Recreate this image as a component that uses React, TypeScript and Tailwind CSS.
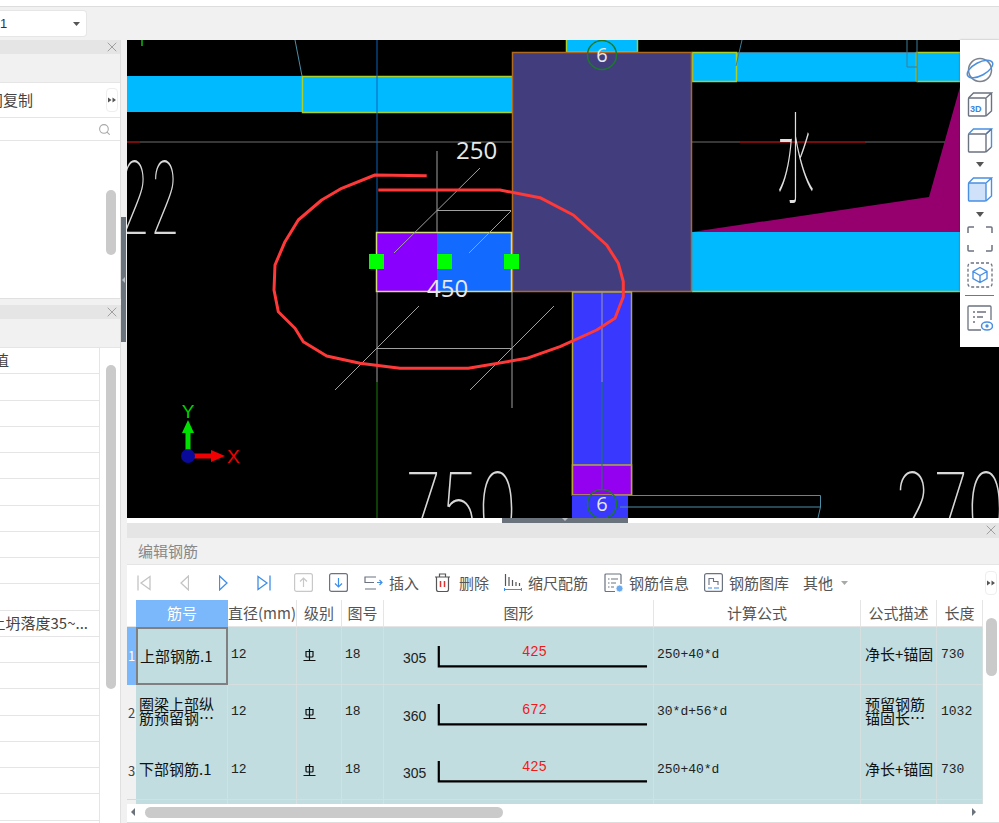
import React from "react";
import { X, Search } from "lucide-react";

const GRID = "grid grid-cols-[9px_92px_69px_45px_42px_270px_207px_76px_46px]";

const ROWS = [
    { no: "1", name: "上部钢筋.1", side: "305", len: "425", formula: "250+40*d", desc: "净长+锚固", total: "730" },
    { no: "2", name: "圈梁上部纵筋预留钢…", side: "360", len: "672", formula: "30*d+56*d", desc: "预留钢筋锚固长…", total: "1032" },
    { no: "3", name: "下部钢筋.1", side: "305", len: "425", formula: "250+40*d", desc: "净长+锚固", total: "730" },
];

const HEADERS = ["直径(mm)", "级别", "图号", "图形", "计算公式", "公式描述", "长度"];

const PANEL_ROWS = Array.from({ length: 18 }, (_, i) => i);

const RED_LINE =
    "426.7,175.7 375,175 341.7,188.3 321.7,200 298.3,220 285,241.7 275,265 274,290 278.3,311.7 295,328.3 303.3,341.7 326.7,356 360,363.3 400,368.3 468.3,368.3 526.7,358.3 560,346.7 596.7,330 615,318.3 623.3,296.7 623.3,281.7 618.3,263.3 606.7,245 573.3,215 540,197.7 500,190 378.3,190";

const DoubleArrow = () => (
    <svg width="8" height="6" viewBox="0 0 8 6" fill="#555">
        <path d="M0 0.5 L3.5 3 L0 5.5Z M4.5 0.5 L8 3 L4.5 5.5Z" />
    </svg>
);

const MoreButton = () => (
    <div className="ml-auto flex h-[24px] w-[12px] items-center justify-center rounded border border-[#eeeeee] bg-white">
        <DoubleArrow />
    </div>
);

const PanelHeader = () => (
    <div className="flex h-[14px] shrink-0 items-center justify-end bg-[#e5e5e5]">
        <X size={16} strokeWidth={1.5} className="text-[#a0a0a0]" />
    </div>
);

const CadDrawing = () => (
    <svg className="block h-[478px] w-[872px]" viewBox="127 40 872 478">
        <rect x="127" y="40" width="872" height="478" fill="#000" />
        <line x1="142" y1="40" x2="142" y2="46" stroke="#0a8a0a" strokeWidth="2" />
        <line x1="295" y1="40" x2="302" y2="76" stroke="#4c8ea6" />
        <rect x="127" y="76" width="176" height="36" fill="#00baff" />
        <rect x="302.5" y="76.5" width="210" height="36" fill="#00baff" stroke="#a9d02c" strokeWidth="1.5" />
        <line x1="127" y1="142" x2="512" y2="142" stroke="#4a4a4a" strokeWidth="1.5" />
        <line x1="127" y1="142" x2="140" y2="142" stroke="#8b0000" strokeWidth="1.5" />
        <line x1="377" y1="40" x2="377" y2="232" stroke="#0b63b8" />

        <text x="120" y="234" textLength="60" lengthAdjust="spacingAndGlyphs" fontSize="100" fontWeight="100" fill="#d8d8d8" className="font-['Inter',sans-serif]">22</text>
        <text x="405" y="545" textLength="112" lengthAdjust="spacingAndGlyphs" fontSize="100" fontWeight="100" fill="#d8d8d8" className="font-['Inter',sans-serif]">750</text>
        <text x="893" y="545" textLength="112" lengthAdjust="spacingAndGlyphs" fontSize="100" fontWeight="100" fill="#d8d8d8" className="font-['Inter',sans-serif]">270</text>

        {/* top right beams */}
        <rect x="566.5" y="38" width="71" height="14" fill="#00baff" stroke="#a9d02c" strokeWidth="1.5" />
        <rect x="692" y="52" width="268" height="30" fill="#00baff" />
        <rect x="692.5" y="52.5" width="44" height="29" fill="#00baff" stroke="#a9d02c" strokeWidth="1.5" />
        <line x1="737" y1="52.5" x2="917" y2="52.5" stroke="#3a7f96" />
        <line x1="737" y1="81.5" x2="917" y2="81.5" stroke="#3a7f96" />
        <path d="M916.5 81.5 V52.5 H960 M916.5 81.5 H960" fill="none" stroke="#a9d02c" strokeWidth="1.5" />
        <line x1="742" y1="40" x2="736" y2="66" stroke="#3a7f96" />
        <path d="M907 40 V67 H917 M917 40 V82" fill="none" stroke="#3a7f96" />

        {/* right side */}
        <polygon points="692,232 929,197 960,87 960,232" fill="#96006e" />
        <rect x="692" y="232" width="268" height="60" fill="#00baff" />
        <line x1="692" y1="291.5" x2="960" y2="291.5" stroke="#a9d02c" strokeWidth="1.5" />
        <line x1="692" y1="142" x2="945" y2="142" stroke="#4a4a4a" strokeWidth="1.5" />
        <line x1="740" y1="142" x2="865" y2="142" stroke="#8b0000" strokeWidth="1.5" />
        <text x="777" y="195" textLength="37" lengthAdjust="spacingAndGlyphs" fontSize="100" fontWeight="100" fill="#e0e0e0" className="font-['Noto_Sans_CJK_SC',sans-serif]">水</text>

        {/* column */}
        <rect x="512.5" y="52.5" width="179" height="239" fill="#423e7e" stroke="#b06a20" strokeWidth="1.5" />

        {/* lower column */}
        <rect x="572.5" y="292" width="59" height="203" fill="#3838ff" stroke="#b8a838" strokeWidth="1.5" />
        <rect x="572.5" y="465" width="59" height="30" fill="#9400f0" stroke="#b8a838" strokeWidth="1.5" />
        <rect x="572" y="495" width="56" height="23" fill="#3838ff" />
        <line x1="602" y1="292" x2="602" y2="382" stroke="#9a9ab0" />
        <line x1="602" y1="382" x2="602" y2="490" stroke="#1d7a55" />
        <path d="M612 495.5 H820.5 V507 L818 518 M620 507 H820" fill="none" stroke="#4c8ea6" />

        {/* small beam */}
        <rect x="377" y="232" width="60" height="60" fill="#8a00ff" />
        <rect x="437" y="232" width="75" height="60" fill="#136aff" />
        <rect x="376.5" y="232.5" width="135" height="59" fill="none" stroke="#d6dd7b" strokeWidth="1.5" />

        <g stroke="#a0a0a0" fill="none">
            <line x1="437" y1="151" x2="437" y2="232" />
            <line x1="480" y1="168" x2="394" y2="253" />
            <line x1="437" y1="210.5" x2="511" y2="210.5" />
            <line x1="511" y1="211" x2="469" y2="253" />
            <line x1="377" y1="292" x2="377" y2="382" />
            <line x1="512" y1="292" x2="512" y2="408" />
            <line x1="377" y1="348.5" x2="512" y2="348.5" />
            <line x1="419" y1="306" x2="335" y2="390" />
            <line x1="554" y1="306" x2="470" y2="390" />
        </g>
        <line x1="377" y1="382" x2="377" y2="518" stroke="#1d7a10" />

        <text x="456" y="159" fontSize="24" fill="#e8e8e8" className="font-['Open_Sans',sans-serif]">250</text>
        <text x="427" y="297" fontSize="24" fill="#e8e8e8" className="font-['Open_Sans',sans-serif]">450</text>

        <rect x="369" y="254" width="15" height="15" fill="#00ff00" />
        <rect x="437" y="254" width="15" height="15" fill="#00ff00" />
        <rect x="504" y="254" width="15" height="15" fill="#00ff00" />

        <circle cx="602" cy="55" r="14.5" fill="none" stroke="#1a7a2a" strokeWidth="1.5" />
        <text x="602" y="62" textAnchor="middle" fontSize="20" fill="#e8e8e8" className="font-['Open_Sans',sans-serif]">6</text>
        <circle cx="602" cy="504" r="14.5" fill="none" stroke="#1a7a2a" strokeWidth="1.5" />
        <text x="602" y="511" textAnchor="middle" fontSize="20" fill="#e8e8e8" className="font-['Open_Sans',sans-serif]">6</text>

        <polyline points={RED_LINE} fill="none" stroke="#ff3838" strokeWidth="3" strokeLinejoin="round" />

        {/* axis */}
        <rect x="185.5" y="432" width="5" height="22" fill="#00e000" />
        <polygon points="188,420 182,433 194,433" fill="#00e000" />
        <rect x="192" y="453.5" width="20" height="5" fill="#f00000" />
        <polygon points="225,456 211,450 211,462" fill="#f00000" />
        <circle cx="188" cy="456" r="7" fill="#0a0a9a" />
        <text x="188" y="418" textAnchor="middle" fontSize="19" fontWeight="300" fill="#00d000" className="font-['Liberation_Sans',sans-serif]">Y</text>
        <text x="227" y="463" fontSize="19" fontWeight="300" fill="#f00000" className="font-['Liberation_Sans',sans-serif]">X</text>
    </svg>
);

const CUBE = "M1.5 7 a1 1 0 0 1 1-1 H18 a1 1 0 0 1 1 1 V23 a1 1 0 0 1-1 1 H2.5 a1 1 0 0 1-1-1Z";

const SideTools = () => (
    <div className="absolute right-0 top-0 flex h-[307px] w-[39px] flex-col items-center bg-white pt-[17px] shadow-[0_0_2px_rgba(0,0,0,0.3)]">
        <svg width="28" height="26" viewBox="0 0 28 26" fill="none">
            <circle cx="14" cy="13" r="11.5" stroke="#7d838c" strokeWidth="1.5" />
            <ellipse cx="14" cy="12" rx="14" ry="6.5" transform="rotate(-28 14 12)" stroke="#4a90e2" strokeWidth="1.5" />
        </svg>
        <svg className="mt-[9px]" width="26" height="26" viewBox="0 0 26 26" fill="none" stroke="#6b7280" strokeWidth="1.4">
            <path d={CUBE} />
            <path d="M1.5 6 L6.5 1 H24.5 L19 6 M24.5 1 V19 L19 24" />
            <text x="3" y="20" fontSize="9" fontWeight="700" fill="#3b86e0" stroke="none" className="font-['Liberation_Sans',sans-serif]">3D</text>
        </svg>
        <svg className="mt-[10px]" width="26" height="26" viewBox="0 0 26 26" fill="none" stroke="#6b7280" strokeWidth="1.4">
            <path d={CUBE} />
            <path d="M1.5 6 L6.5 1 H24.5 L19 6 M24.5 1 V19" stroke="#4a90e2" />
            <path d="M24.5 19 L19 24 M24.5 1 L19 6" />
        </svg>
        <svg className="mt-[8px]" width="8" height="5" viewBox="0 0 8 5" fill="#555"><path d="M0 0 H8 L4 5Z" /></svg>
        <svg className="mt-[10px]" width="26" height="26" viewBox="0 0 26 26" fill="none" stroke="#4a90e2" strokeWidth="1.4">
            <path d={CUBE} fill="#cfe2f9" />
            <path d="M1.5 6 L6.5 1 H24.5 L19 6 M24.5 1 V19 L19 24" />
        </svg>
        <svg className="mt-[9px]" width="8" height="5" viewBox="0 0 8 5" fill="#555"><path d="M0 0 H8 L4 5Z" /></svg>
        <svg className="mt-[9px]" width="26" height="26" viewBox="0 0 26 26" fill="none" stroke="#6b7280" strokeWidth="1.5">
            <path d="M1 7 V2 a1 1 0 0 1 1-1 H7 M19 1 H24 a1 1 0 0 1 1 1 V7 M25 19 V24 a1 1 0 0 1-1 1 H19 M7 25 H2 a1 1 0 0 1-1-1 V19" />
        </svg>
        <svg className="mt-[10px]" width="26" height="26" viewBox="0 0 26 26" fill="none">
            <rect x="1" y="1" width="24" height="24" rx="3" stroke="#6b7280" strokeWidth="1.3" strokeDasharray="3 2" />
            <path d="M13 5.5 L20 9.5 V16.5 L13 20.5 L6 16.5 V9.5Z M6 9.5 L13 13.5 L20 9.5 M13 13.5 V20.5" stroke="#4a90e2" strokeWidth="1.4" />
        </svg>
        <div className="mt-[7px] h-[1px] w-[29px] bg-[#777777]" />
        <svg className="mt-[9px]" width="26" height="26" viewBox="0 0 26 26" fill="none" stroke="#6b7280" strokeWidth="1.3">
            <path d="M14 25 H2 a1 1 0 0 1-1-1 V2 a1 1 0 0 1 1-1 H23 a1 1 0 0 1 1 1 V15" />
            <path d="M6 7 H8 M10 7 H19 M6 12 H8 M10 12 H16 M6 17 H8" />
            <ellipse cx="20" cy="21" rx="5.5" ry="4" fill="#fff" stroke="#4a90e2" strokeWidth="1.5" />
            <circle cx="20" cy="21" r="1.7" fill="#4a90e2" stroke="none" />
        </svg>
    </div>
);

const ToolLabel: React.FC<{ className: string; text: string }> = ({ className, text }) => (
    <span className={`whitespace-nowrap text-[15px] leading-none text-[#555555] ${className}`}>{text}</span>
);

const EditToolbar = () => (
    <div className="flex h-[35px] shrink-0 items-center bg-white pl-[10px] pr-[2px]">
        <svg width="14" height="16" viewBox="0 0 14 16" fill="none" stroke="#c4c4c4" strokeWidth="1.3">
            <path d="M1 0.5 V15.5 M13 1.5 L4 8 L13 14.5Z" />
        </svg>
        <svg className="ml-[29px]" width="9" height="16" viewBox="0 0 9 16" fill="none" stroke="#c4c4c4" strokeWidth="1.3">
            <path d="M8.5 1 L1 8 L8.5 15Z" />
        </svg>
        <svg className="ml-[30px]" width="9" height="16" viewBox="0 0 9 16" fill="none" stroke="#3f8ee8" strokeWidth="1.3">
            <path d="M0.5 1 L8 8 L0.5 15Z" />
        </svg>
        <svg className="ml-[29px]" width="14" height="16" viewBox="0 0 14 16" fill="none" stroke="#3f8ee8" strokeWidth="1.3">
            <path d="M13 0.5 V15.5 M1 1.5 L10 8 L1 14.5Z" />
        </svg>
        <svg className="ml-[23px]" width="19" height="19" viewBox="0 0 19 19" fill="none" stroke="#c8c8c8" strokeWidth="1.2">
            <rect x="0.6" y="0.6" width="17.8" height="17.8" rx="2" />
            <path d="M9.5 14 V5 M6 8.5 L9.5 5 L13 8.5" />
        </svg>
        <svg className="ml-[16px]" width="19" height="19" viewBox="0 0 19 19" fill="none" strokeWidth="1.2">
            <rect x="0.6" y="0.6" width="17.8" height="17.8" rx="2" stroke="#6b7280" />
            <path d="M9.5 5 V14 M6 10.5 L9.5 14 L13 10.5" stroke="#3f8ee8" />
        </svg>
        <svg className="ml-[16px]" width="19" height="14" viewBox="0 0 19 14" fill="none" stroke="#6b7280" strokeWidth="1.2">
            <path d="M12 1 H1 V6.5 H10 M1 13 H12" />
            <path d="M13 6.5 H18 M15.5 4 L18 6.5 L15.5 9" stroke="#3f8ee8" />
        </svg>
        <ToolLabel className="ml-[6px]" text="插入" />
        <svg className="ml-[15px]" width="17" height="19" viewBox="0 0 17 19" fill="none" stroke="#555" strokeWidth="1.2">
            <path d="M1 4 H16 M5.5 4 V1 H11.5 V4 M2.5 4 V16.5 a2 2 0 0 0 2 2 H12.5 a2 2 0 0 0 2-2 V4" />
            <path d="M6.5 8 V14 M10.5 8 V14" stroke="#e03030" strokeWidth="1.5" />
        </svg>
        <ToolLabel className="ml-[8px]" text="删除" />
        <svg className="ml-[15px]" width="18" height="19" viewBox="0 0 18 19" fill="none" stroke="#555" strokeWidth="1.2">
            <path d="M1.5 1 V13 M5 4 V13 M8.5 7 V13 M12 9 V13 M15.5 10 V13" />
            <path d="M0.5 15 V18 M17.5 15 V18 M0.5 16.5 H17.5" stroke="#3f8ee8" />
        </svg>
        <ToolLabel className="ml-[6px]" text="缩尺配筋" />
        <svg className="ml-[16px]" width="20" height="20" viewBox="0 0 20 20" fill="none" stroke="#6b7280" strokeWidth="1.2">
            <path d="M11 18.5 H2 a1 1 0 0 1-1-1 V2 a1 1 0 0 1 1-1 H16 a1 1 0 0 1 1 1 V11" />
            <path d="M4 6 H5.5 M7 6 H14 M4 10 H5.5 M7 10 H12 M4 14 H5.5 M7 14 H10" />
            <circle cx="15.5" cy="15.5" r="3.5" fill="#6aa9ee" stroke="#fff" strokeWidth="0.8" />
        </svg>
        <ToolLabel className="ml-[5px]" text="钢筋信息" />
        <svg className="ml-[15px]" width="19" height="19" viewBox="0 0 19 19" fill="none" stroke="#6b7280" strokeWidth="1.2">
            <rect x="0.6" y="0.6" width="17.8" height="17.8" rx="2" />
            <path d="M5 12 V5.5 H9.5 V8.5 H14 V12" strokeWidth="1.1" />
            <path d="M4 15 H8 M10 15 H15" stroke="#3f8ee8" />
        </svg>
        <ToolLabel className="ml-[6px]" text="钢筋图库" />
        <ToolLabel className="ml-[14px]" text="其他" />
        <svg className="ml-[8px]" width="7" height="4" viewBox="0 0 7 4" fill="#a8a8a8"><path d="M0 0 H7 L3.5 4Z" /></svg>
        <MoreButton />
    </div>
);

const BarShape: React.FC<{ side: string; len: string }> = ({ side, len }) => (
    <svg width="270" height="57" viewBox="0 0 270 57">
        <path d="M55 19 V39.5 H264" fill="none" stroke="#000" strokeWidth="2.2" />
        <text x="19" y="36" fontSize="14" fill="#222" className="font-['Liberation_Sans',sans-serif]">{side}</text>
        <text x="151" y="29" textAnchor="middle" fontSize="14" fill="#f01818" className="font-['Liberation_Mono',monospace]">{len}</text>
    </svg>
);

const LevelMark = () => (
    <svg width="13" height="13" viewBox="0 0 13 13" fill="none" stroke="#111" strokeWidth="1.2">
        <path d="M6.5 0 V11 M3 2.5 H10 V7 a1 1 0 0 1-1 1 H4 a1 1 0 0 1-1-1Z M0.5 11.5 H12.5" />
    </svg>
);

const CELL = "flex items-center border-b border-r border-[#d6dfe0] bg-[#c1dde0]";
const MONO = "font-['Liberation_Mono',monospace] text-[13px] text-[#222222]";

const RebarTable = () => (
    <div className="w-[856px] shrink-0 overflow-hidden">
        <div className={`${GRID} h-[27px] bg-white text-[15px] text-[#555555]`}>
            <div className="border-b border-[#e5e5e5]" />
            <div className="flex items-center justify-center bg-[#7ab8fb] text-white">筋号</div>
            {HEADERS.map((h) => (
                <div key={h} className="flex items-center justify-center whitespace-nowrap border-b border-r border-[#e5e5e5]">
                    {h}
                </div>
            ))}
        </div>
        {ROWS.map((r, i) => (
            <div key={r.no} className={`${GRID} h-[57.5px]`}>
                <div
                    className={
                        i === 0
                            ? "flex items-center justify-center bg-[#7ab8fb] text-[13px] text-white"
                            : "flex items-center justify-center border-b border-[#d8d8d8] bg-[#f1f1f1] text-[13px] text-[#444444]"
                    }
                >
                    {r.no}
                </div>
                <div
                    className={
                        i === 0
                            ? "flex items-center border-2 border-[#808080] bg-[#c1dde0] pl-[2px] text-[15px] leading-[14px] text-[#111111]"
                            : `${CELL} pb-[4px] pl-[3px] text-[15px] leading-[14px] text-[#111111]`
                    }
                >
                    {r.name}
                </div>
                <div className={`${CELL} ${MONO} pb-[2px] pl-[3px]`}>12</div>
                <div className={`${CELL} pl-[6px]`}><LevelMark /></div>
                <div className={`${CELL} ${MONO} pb-[2px] pl-[3px]`}>18</div>
                <div className={CELL}><BarShape side={r.side} len={r.len} /></div>
                <div className={`${CELL} ${MONO} pb-[2px] pl-[3px]`}>{r.formula}</div>
                <div className={`${CELL} pb-[4px] pl-[4px] text-[15px] leading-[14px] text-[#111111]`}>{r.desc}</div>
                <div className={`${CELL} ${MONO} pb-[2px] pl-[4px]`}>{r.total}</div>
            </div>
        ))}
        <div className={`${GRID} h-[8px]`}>
            <div className="bg-[#f1f1f1]" />
            {[0, 1, 2, 3, 4, 5, 6, 7].map((n) => (
                <div key={n} className="border-r border-[#d6dfe0] bg-[#c1dde0]" />
            ))}
        </div>
    </div>
);

const App: React.FC = () => (
    <div className="flex h-[823px] w-[999px] flex-col overflow-hidden bg-[#f1f1f1] font-['Noto_Sans_CJK_SC',sans-serif]">
        <div className="h-[7px] shrink-0 border-b border-[#dddddd] bg-white" />
        <div className="flex h-[33px] shrink-0 items-center bg-[#f1f1f1]">
            <div className="flex h-[27px] w-[87px] items-center justify-between rounded-r border border-l-0 border-[#e6e6e6] bg-white pr-[6px] text-[13px] text-[#333333]">
                <span className="font-['Liberation_Sans',sans-serif]">1</span>
                <svg width="7" height="4" viewBox="0 0 7 4" fill="#555"><path d="M0 0 H7 L3.5 4Z" /></svg>
            </div>
        </div>

        <div className="flex min-h-0 flex-1">
            {/* left panels */}
            <div className="flex w-[121px] shrink-0 flex-col">
                <div className="flex h-[259px] shrink-0 flex-col border-b border-r border-[#e0e0e0] bg-white">
                    <PanelHeader />
                    <div className="h-[29px] shrink-0 border-b border-[#e5e5e5] bg-[#f1f1f1]" />
                    <div className="flex h-[35px] shrink-0 items-center border-b border-[#e5e5e5] pr-[2px]">
                        <div className="flex w-[33px] justify-end overflow-hidden">
                            <span className="shrink-0 whitespace-nowrap text-[15px] text-[#444444]">层间复制</span>
                        </div>
                        <MoreButton />
                    </div>
                    <div className="flex h-[23px] shrink-0 items-center justify-end border-b border-[#e5e5e5] pr-[9px]">
                        <Search size={13} className="text-[#a8a8a8]" />
                    </div>
                    <div className="min-h-0 flex-1 pl-[106px] pt-[49px]">
                        <div className="h-[65px] w-[10px] rounded-full bg-[#cacaca]" />
                    </div>
                </div>
                <div className="h-[6px] shrink-0" />
                <div className="flex min-h-0 flex-1 flex-col border-r border-[#e0e0e0] bg-white">
                    <PanelHeader />
                    <div className="h-[29px] shrink-0 border-b border-[#e5e5e5] bg-[#f1f1f1]" />
                    <div className="flex min-h-0 flex-1">
                        <div className="w-[100px] shrink-0 border-r border-[#e5e5e5]">
                            {PANEL_ROWS.map((i) => (
                                <div key={i} className="flex h-[26.25px] items-center justify-end overflow-hidden border-b border-[#e5e5e5] text-[15px] text-[#444444]">
                                    {i === 0 && (
                                        <div className="mr-[90px] flex justify-end">
                                            <span className="shrink-0 whitespace-nowrap">属性值</span>
                                        </div>
                                    )}
                                    {i === 10 && (
                                        <span className="mr-[11px] shrink-0 whitespace-nowrap">土坍落度35~...</span>
                                    )}
                                </div>
                            ))}
                        </div>
                        <div className="pl-[6px] pt-[17px]">
                            <div className="h-[324px] w-[10px] rounded-full bg-[#cacaca]" />
                        </div>
                    </div>
                </div>
            </div>

            {/* splitter */}
            <div className="flex w-[6px] shrink-0 flex-col pt-[177px]">
                <div className="flex h-[125px] w-[5px] items-center justify-center bg-[#6a737b]">
                    <svg width="3" height="6" viewBox="0 0 3 6" fill="#b8bec3"><path d="M3 0 V6 L0 3Z" /></svg>
                </div>
            </div>

            {/* canvas and rebar editor */}
            <div className="flex min-w-0 flex-1 flex-col">
                <div className="relative h-[478px] shrink-0">
                    <CadDrawing />
                    <SideTools />
                </div>
                <div className="h-[5px] shrink-0 bg-white pl-[375px]">
                    <div className="flex h-[5px] w-[126px] justify-center bg-[#6a737b]">
                        <svg width="6" height="3" viewBox="0 0 6 3" fill="#b8bec3"><path d="M0 0 H6 L3 3Z" /></svg>
                    </div>
                </div>
                <div className="flex min-h-0 flex-1 flex-col border-b border-[#dddddd] bg-white">
                    <PanelHeader />
                    <div className="flex h-[28px] shrink-0 items-center border-y border-[#e5e5e5] bg-[#f1f1f1] pl-[11px] text-[15px] text-[#888888]">
                        编辑钢筋
                    </div>
                    <EditToolbar />
                    <div className="flex h-[204px] shrink-0">
                        <RebarTable />
                        <div className="pl-[3px] pt-[18px]">
                            <div className="h-[58px] w-[11px] rounded-full bg-[#cacaca]" />
                        </div>
                    </div>
                    <div className="flex h-[16px] shrink-0 items-center pl-[4px]">
                        <svg width="4" height="8" viewBox="0 0 4 8" fill="#6a737b"><path d="M4 0 V8 L0 4Z" /></svg>
                        <div className="ml-[10px] h-[11px] w-[358px] rounded-full bg-[#cacaca]" />
                        <svg className="ml-[469px]" width="4" height="8" viewBox="0 0 4 8" fill="#6a737b"><path d="M0 0 V8 L4 4Z" /></svg>
                    </div>
                </div>
            </div>
        </div>
    </div>
);

export default App;
